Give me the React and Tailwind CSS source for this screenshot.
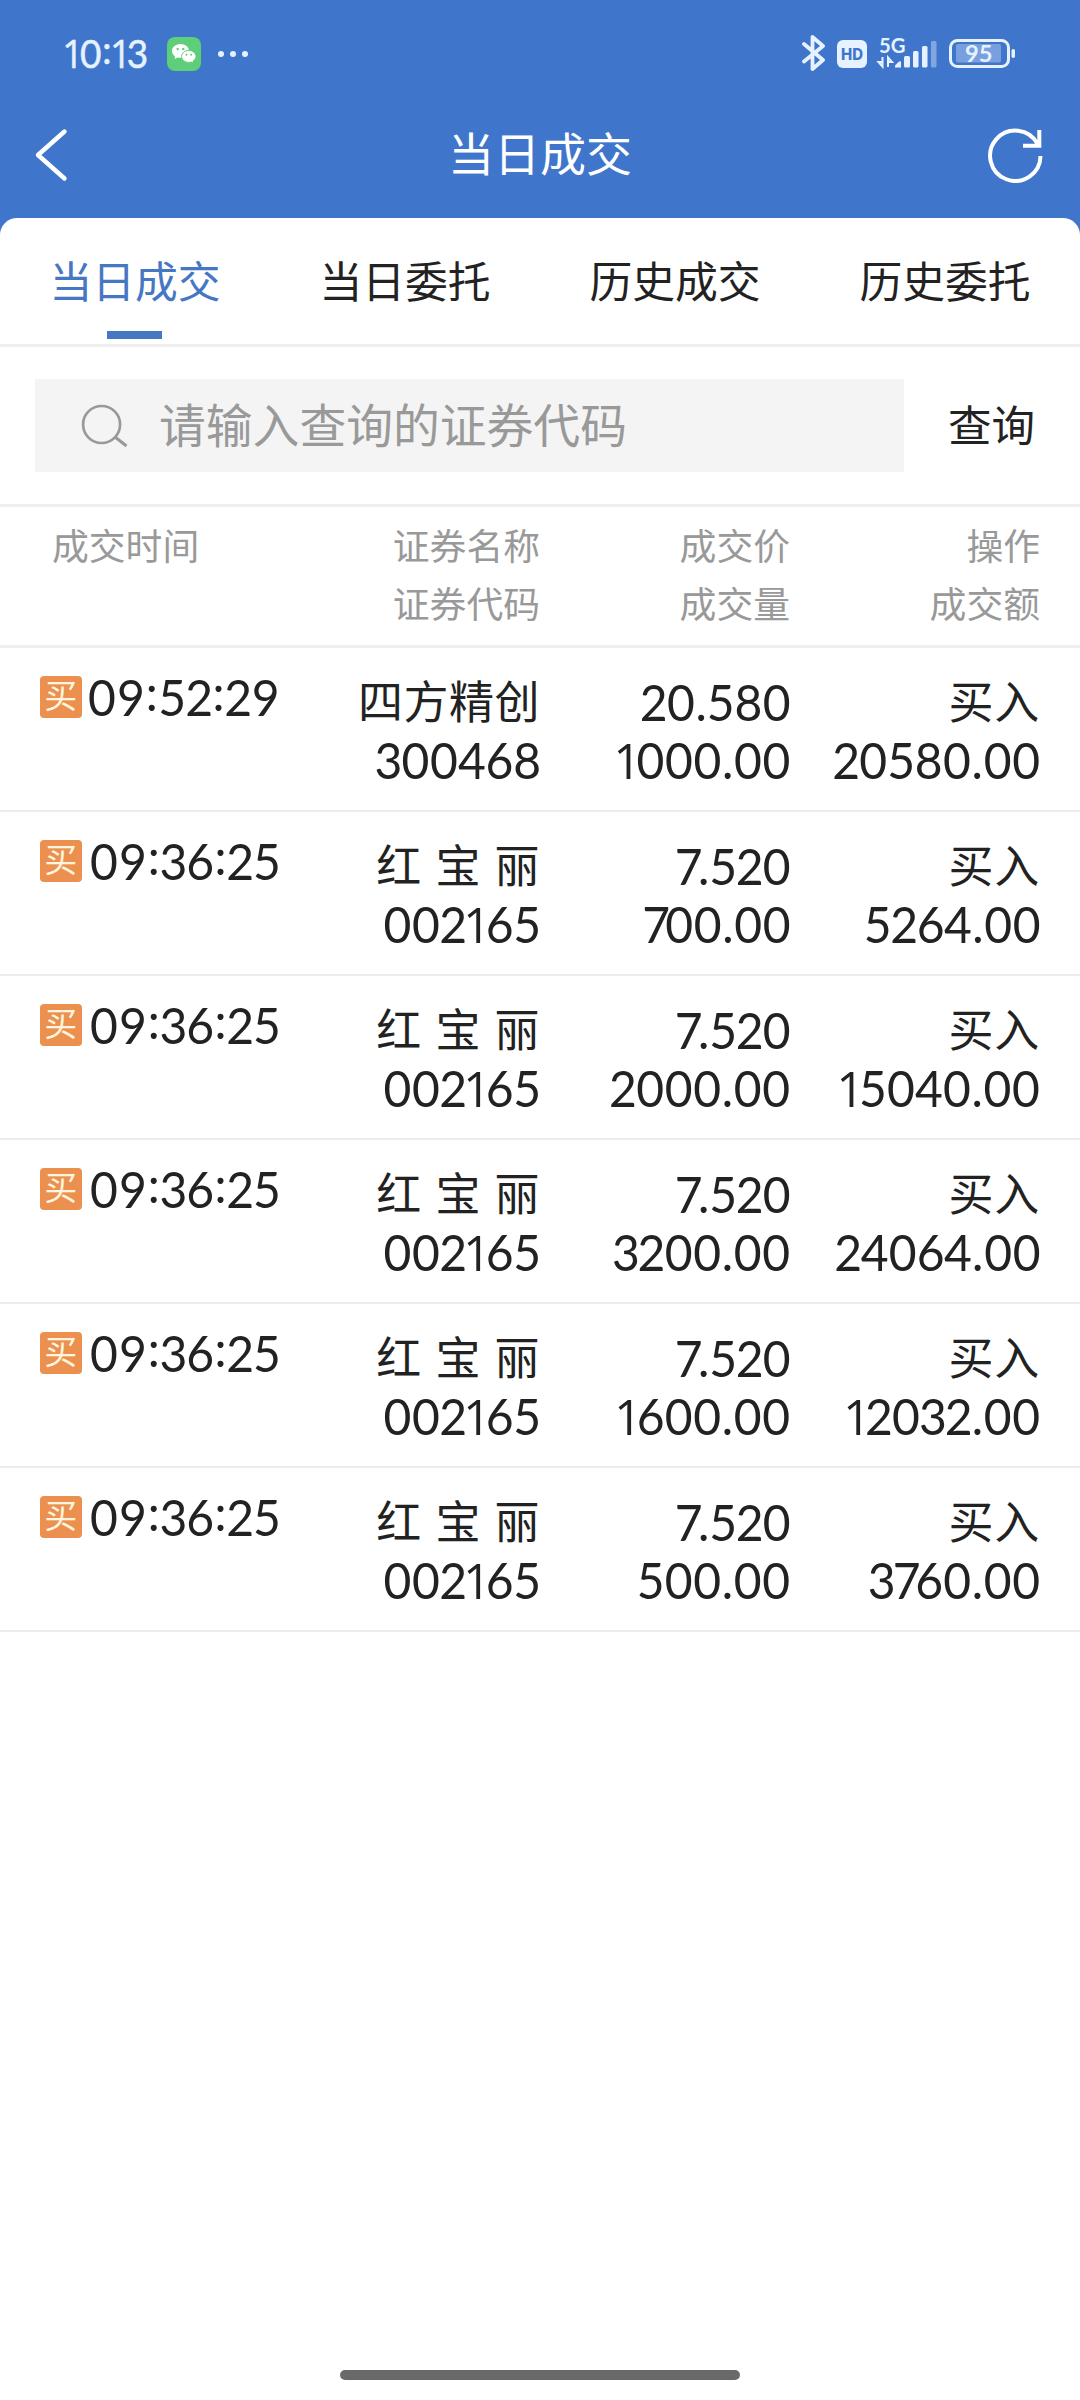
const tabs = ["当日成交", "当日委托", "历史成交", "历史委托"];

const columns = [
  { top: "证券名称", bottom: "证券代码" },
  { top: "成交价", bottom: "成交量" },
  { top: "操作", bottom: "成交额" },
];

const deals = [
  { time: "09:52:29", name: "四方精创", code: "300468", price: "20.580", volume: "1000.00", amount: "20580.00" },
  { time: "09:36:25", name: "红 宝 丽", code: "002165", price: "7.520", volume: "700.00", amount: "5264.00" },
  { time: "09:36:25", name: "红 宝 丽", code: "002165", price: "7.520", volume: "2000.00", amount: "15040.00" },
  { time: "09:36:25", name: "红 宝 丽", code: "002165", price: "7.520", volume: "3200.00", amount: "24064.00" },
  { time: "09:36:25", name: "红 宝 丽", code: "002165", price: "7.520", volume: "1600.00", amount: "12032.00" },
  { time: "09:36:25", name: "红 宝 丽", code: "002165", price: "7.520", volume: "500.00", amount: "3760.00" },
];

// Lato digits are tabular, these make them proportional.
// Its "1" has a foot, so that one comes from Open Sans.
const digitStyles = {
  "1": "font-['Open_Sans',sans-serif] -ml-[0.06em] -mr-[0.065em] tracking-[-0.025em]",
  "2": "-mx-[0.03em]",
  "3": "-mx-[0.03em]",
  "4": "-mx-[0.01em]",
  "5": "-mx-[0.013em]",
  "6": "-mx-[0.013em]",
  "7": "-ml-[0.04em] -mr-[0.07em] tracking-[-0.03em]",
  "8": "-mx-[0.005em]",
  ":": "inline-block leading-none -translate-y-[0.1em]",
};

const Digits = ({ value }) => (
  <span className="inline-block font-['Lato',sans-serif] whitespace-nowrap origin-right scale-x-[0.96]">
    {value.split("").map((char, index) => (
      <span key={index} className={digitStyles[char]}>{char}</span>
    ))}
  </span>
);

const StatusBar = () => (
  <div className="h-[108px] pl-[61px] pr-[64px] flex items-center justify-between text-[#e6f2ff]">
    <div className="flex items-center">
      <div className="w-[88px] pb-[3px] text-[38.500px] leading-none tracking-[0.8px] [-webkit-text-stroke:0.5px]">
        <Digits value="10:13" />
      </div>
      <svg className="ml-[18px] w-[34px] h-[34px]" viewBox="0 0 34 34">
        <rect width="34" height="34" rx="8" fill="#5fce78" />
        <path d="M13.500 7C8.800 7 5 10.100 5 14c0 2.200 1.200 4.100 3 5.400L7.600 22l3-1.600c.9.300 1.900.4 2.900.4C18.200 20.800 22 17.800 22 14S18.200 7 13.500 7z" fill="#fff" />
        <path d="M21.800 13.400c-4 0-7.200 2.700-7.200 6s3.200 6 7.200 6c.9 0 1.700-.1 2.400-.3l2.300 1.200-.5-2.200c1.800-1.100 3-2.800 3-4.700 0-3.300-3.200-6-7.200-6z" fill="#fff" stroke="#5fce78" strokeWidth="1" />
        <g fill="#5fce78">
          <circle cx="10.700" cy="12" r="1.200" />
          <circle cx="16.300" cy="12" r="1.200" />
          <circle cx="19.500" cy="17.800" r="1" />
          <circle cx="24.200" cy="17.800" r="1" />
        </g>
      </svg>
      <div className="ml-[17px] flex gap-[6px]">
        <span className="size-[6px] rounded-full bg-current" />
        <span className="size-[6px] rounded-full bg-current" />
        <span className="size-[6px] rounded-full bg-current" />
      </div>
    </div>

    <svg className="w-[214px] h-[60px]" viewBox="802 24 214 60" fill="none">
      {/* bluetooth */}
      <path d="M804 44l19 16-10.500 9V37L823 46l-19 15.500" stroke="currentColor" strokeWidth="3.800" strokeLinejoin="round" strokeLinecap="round" />
      {/* HD */}
      <rect x="837" y="40" width="30" height="28" rx="6" fill="currentColor" />
      <text x="841" y="59.500" textLength="22" lengthAdjust="spacingAndGlyphs" className="font-['Inter',sans-serif] font-extrabold text-[16px]" fill="#3f76cc">HD</text>
      {/* signal */}
      <text x="879" y="52.500" textLength="26.500" lengthAdjust="spacingAndGlyphs" className="font-['Lato',sans-serif] font-bold text-[21px]" fill="currentColor">5G</text>
      <path d="M882.500 57v9.500l-4-4.500h4M888 67v-9.500l4 4.500h-4" stroke="currentColor" strokeWidth="2" />
      <g fill="currentColor">
        <path d="M895 67.500v-2l4-4h2v6z" />
        <rect x="904" y="56" width="6" height="11.500" rx="1.500" />
        <rect x="913" y="51" width="5.500" height="16.500" rx="1.500" />
        <rect x="922" y="46" width="5.500" height="21.500" rx="1.500" />
        <rect x="931" y="41" width="5.500" height="26.500" rx="1.500" opacity="0.4" />
      </g>
      {/* battery */}
      <rect x="950.500" y="40.500" width="58" height="26" rx="7" stroke="currentColor" strokeWidth="3" />
      <rect x="956" y="44" width="45" height="18.500" rx="2" fill="currentColor" opacity="0.35" />
      <rect x="1011.500" y="49" width="3.500" height="9" rx="1.700" fill="currentColor" />
      <text x="965" y="61.500" textLength="27.500" lengthAdjust="spacingAndGlyphs" className="font-['Lato',sans-serif] font-bold text-[23.500px]" fill="currentColor">95</text>
    </svg>
  </div>
);

const TitleBar = () => (
  <div className="h-[110px] px-[34px] pb-[16px] flex items-center justify-between text-white">
    <svg className="w-[60px] h-[56px]" viewBox="34 127 60 56" fill="none">
      <path d="M64.500 131.500L38 155l26.500 23.500" stroke="currentColor" strokeWidth="4.400" strokeLinejoin="round" strokeLinecap="round" />
    </svg>
    <h1 className="pb-[8px] text-[46px] leading-none">当日成交</h1>
    <svg className="w-[60px] h-[56px]" viewBox="986 127 60 56" fill="none">
      <path d="M1040.500 156A25.200 25.200 0 1 1 1037.500 143.800M1039.300 130v15.800H1023" stroke="currentColor" strokeWidth="4" />
    </svg>
  </div>
);

const Tabs = () => (
  <nav className="h-[129px] border-b-[3px] border-[#eeeeee] grid grid-cols-4">
    {tabs.map((tab, index) => (
      <div key={tab} className="flex flex-col items-center pt-[35px]">
        <span className={index === 0 ? "text-[42.800px] leading-[52px] text-[#4577c4]" : "text-[42.800px] leading-[52px]"}>
          {tab}
        </span>
        {index === 0 && <span className="mt-[26px] mr-[1px] w-[55px] h-[8px] bg-[#4577c4]" />}
      </div>
    ))}
  </nav>
);

const SearchBar = () => (
  <div className="h-[160px] border-b-[3px] border-[#eeeeee] pl-[35px] pt-[32px] flex">
    <div className="w-[869px] h-[93px] bg-[#f4f4f4] flex items-center pl-[45px] text-[#999999]">
      <svg className="w-[50px] h-[48px]" viewBox="80 401 50 48" fill="none">
        <circle cx="101.600" cy="423.500" r="18.500" stroke="currentColor" strokeWidth="2.700" />
        <path d="M115 436l11.500 9" stroke="currentColor" strokeWidth="3" />
      </svg>
      <span className="ml-[29px] pb-[5px] text-[46.800px] leading-none">请输入查询的证券代码</span>
    </div>
    <button className="ml-[44px] pb-[4px] h-[93px] text-[43.500px] leading-none">查询</button>
  </div>
);

const TableHead = () => (
  <div className="h-[141px] border-b-[3px] border-[#eeeeee] pt-[8px] pl-[52px] pr-[40px] flex text-[36.800px] leading-[58px] text-[#999999]">
    <div className="w-[238px]">成交时间</div>
    {columns.map((col) => (
      <div key={col.top} className="w-[250px] text-right">
        <div>{col.top}</div>
        <div>{col.bottom}</div>
      </div>
    ))}
  </div>
);

const DealRow = ({ deal }) => (
  <div className="h-[164px] border-b-2 border-[#ececec] pt-[22px] pl-[40px] pr-[39px] flex leading-[58px] tracking-[0.7px]">
    <div className="w-[241px] h-[50px] flex items-center justify-between">
      <span className="size-[42px] shrink-0 mt-[4px] -mr-[10px] rounded-[4px] bg-[#ec904f] text-[#fff5df] text-[33px] leading-[37px] text-center">买</span>
      <span className="text-[50px] leading-[50px] tracking-[1.100px]">
        <Digits value={deal.time} />
      </span>
    </div>
    <div className="w-[260px] text-right">
      <div className="h-[58px] pt-[1px] pr-[1px] text-[45px] tracking-[0.5px] [word-spacing:3px]">{deal.name}</div>
      <div className="h-[58px] text-[50px]"><Digits value={deal.code} /></div>
    </div>
    <div className="w-[250px] text-right text-[50px]">
      <div className="h-[58px]"><Digits value={deal.price} /></div>
      <div className="h-[58px]"><Digits value={deal.volume} /></div>
    </div>
    <div className="w-[250px] text-right">
      <div className="h-[58px] pt-[1px] pr-[1px] text-[45px]">买入</div>
      <div className="h-[58px] text-[50px]"><Digits value={deal.amount} /></div>
    </div>
  </div>
);

const App = () => {
  return (
    <div className="w-[1080px] h-[2400px] bg-[#3f76cc] flex flex-col overflow-hidden text-[#222222] font-['Noto_Sans_CJK_SC',sans-serif]">
      <StatusBar />
      <TitleBar />
      <main className="flex-1 bg-white rounded-t-[17px] flex flex-col">
        <Tabs />
        <SearchBar />
        <TableHead />
        {deals.map((deal, index) => (
          <DealRow key={`deal-${index}`} deal={deal} />
        ))}
        <div className="mt-auto mb-[20px] mx-auto w-[400px] h-[10px] rounded-full bg-[#696969]" />
      </main>
    </div>
  );
};

export default App;
